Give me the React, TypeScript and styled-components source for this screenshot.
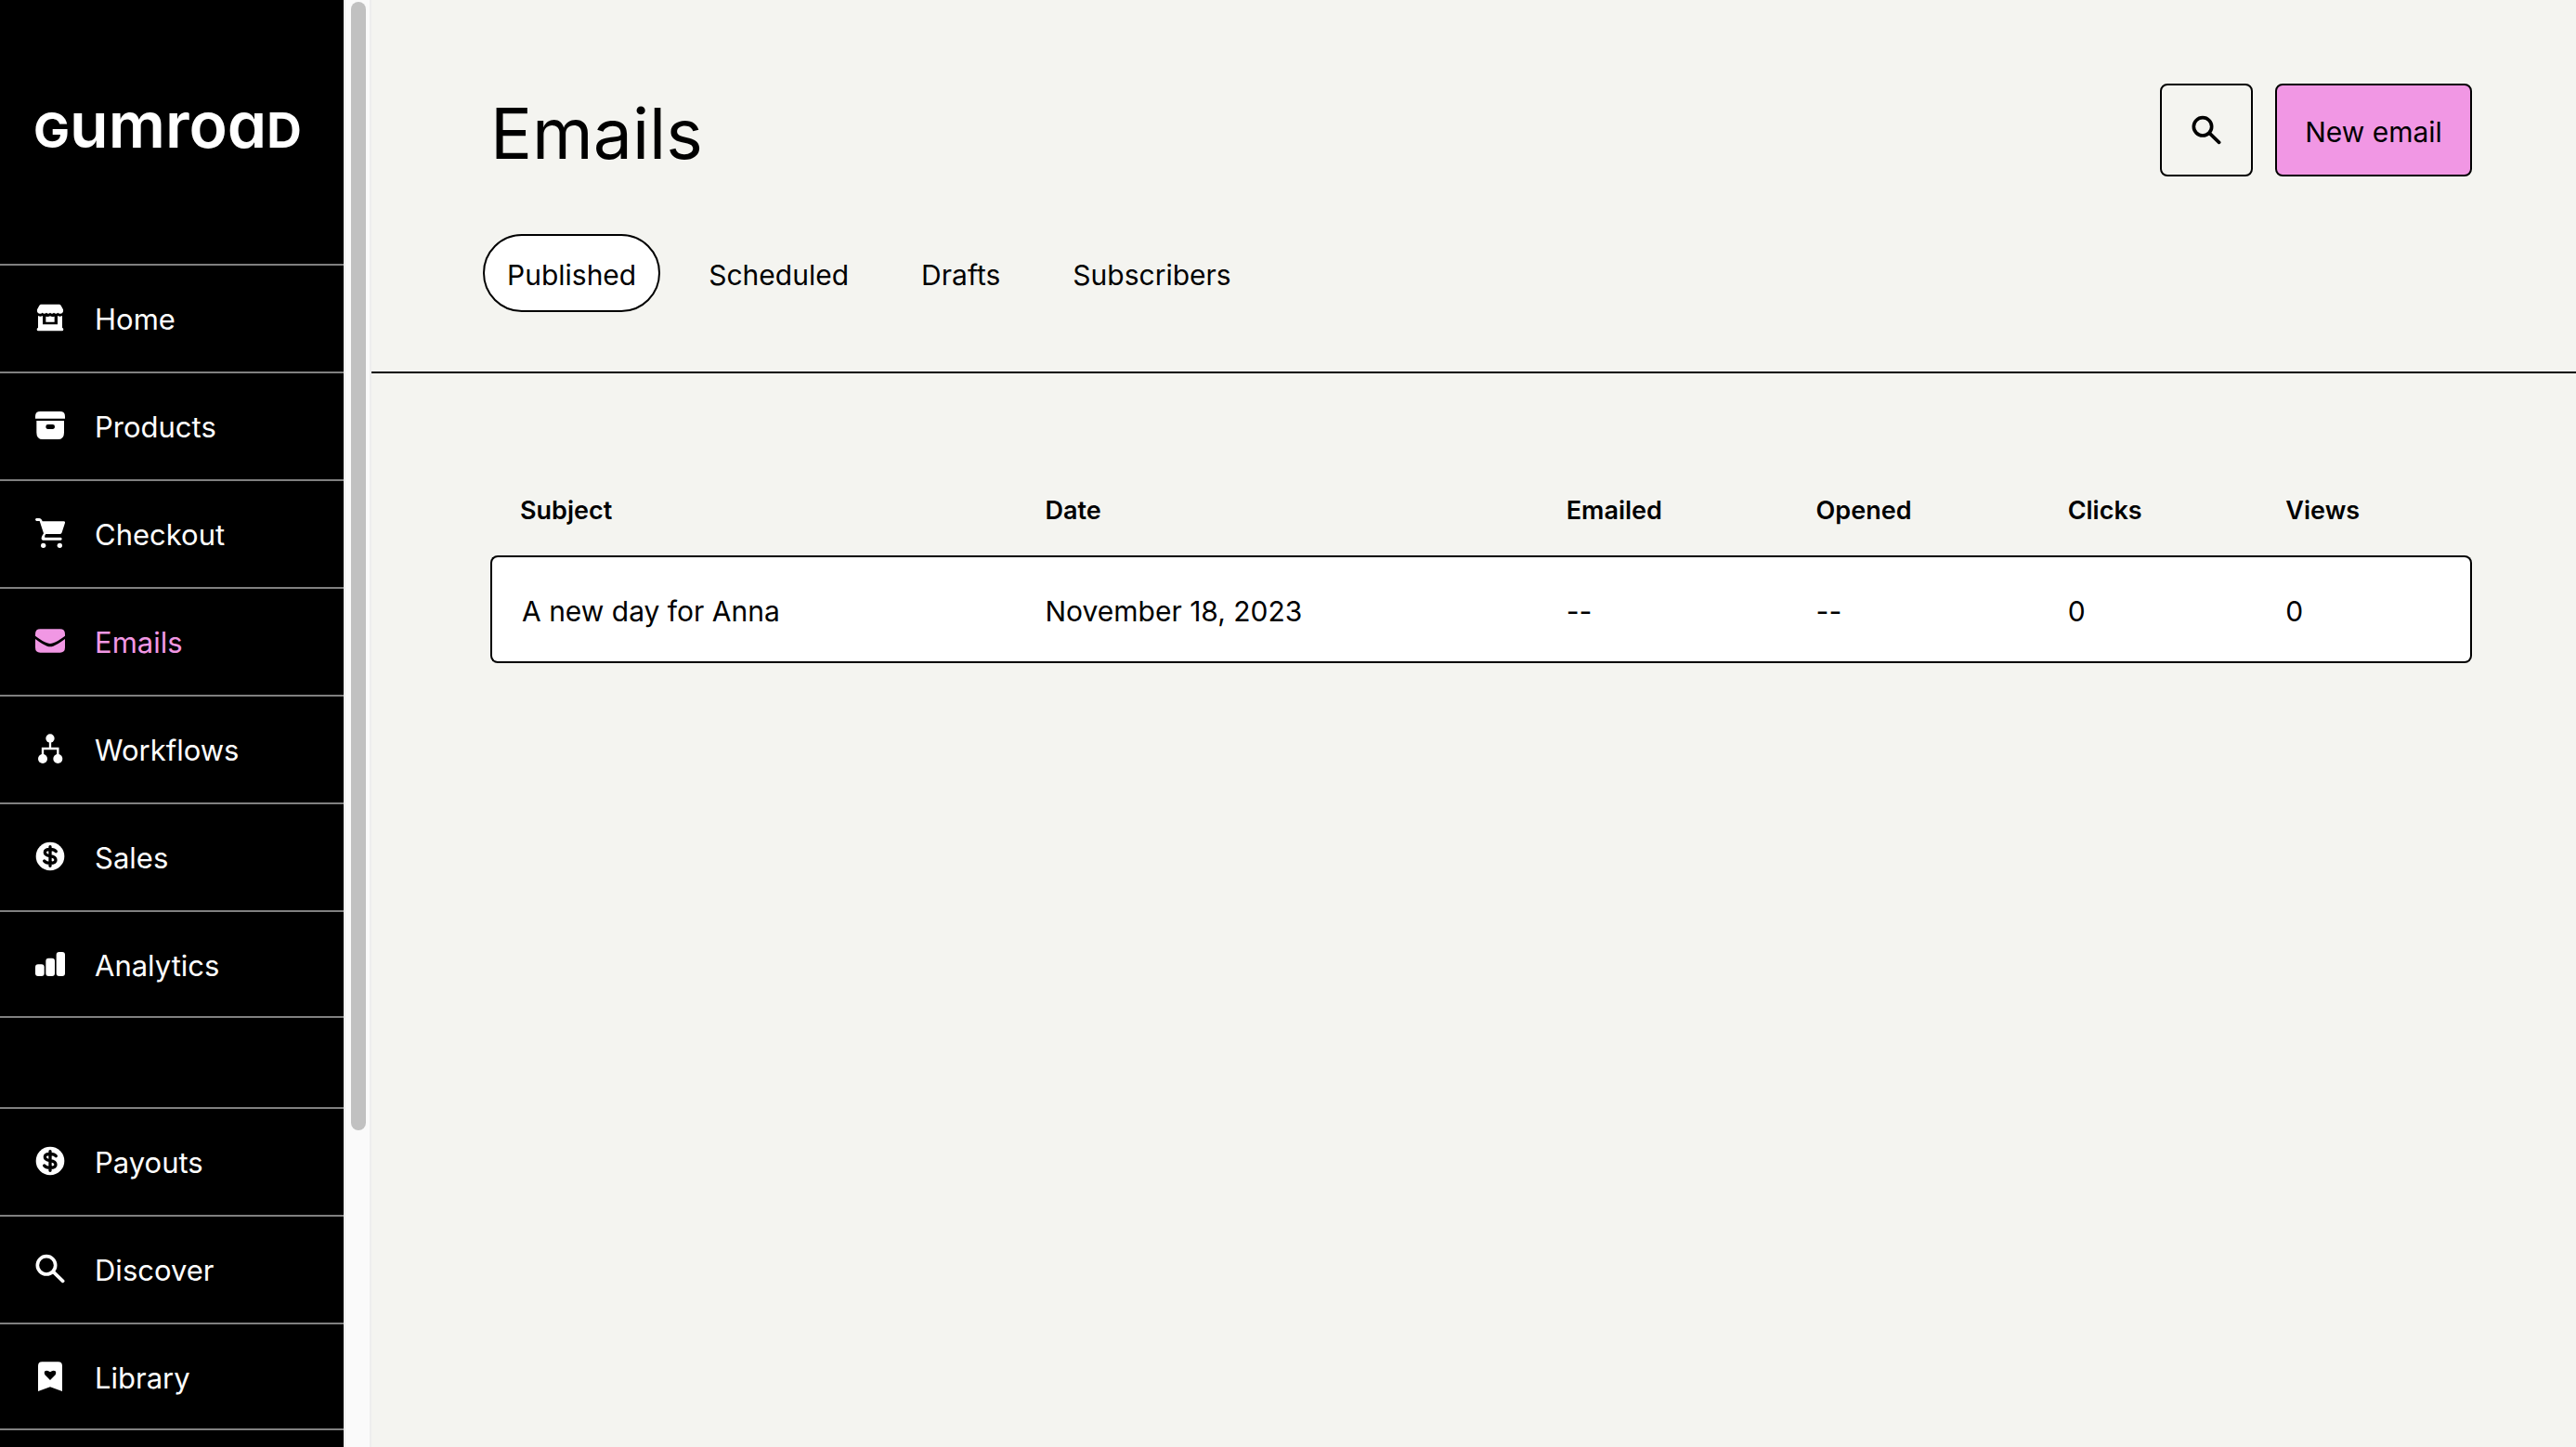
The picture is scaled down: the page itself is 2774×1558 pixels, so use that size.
import React from "react";
import styled, { createGlobalStyle } from "styled-components";

const PINK = "#f197e4";
const CANVAS = "#f4f4f0";

const GlobalStyle = createGlobalStyle`
  *, *::before, *::after { box-sizing: border-box; }
  html, body { margin: 0; background: ${CANVAS}; }
  body, button {
    font-family: Inter, "Liberation Sans", Arial, sans-serif;
    font-size: 30px;
    line-height: 44px;
    color: #000;
  }
`;

const Shell = styled.div`
  display: flex;
  min-height: 100vh;
`;

const Sidebar = styled.nav`
  flex: 0 0 370px;
  height: 100vh;
  overflow: hidden;
  background: #000;
  color: #fff;
`;

const LogoLink = styled.a`
  display: flex;
  align-items: baseline;
  height: 284px;
  padding: 102px 0 0 36px;
  color: #fff;
  text-decoration: none;
  font-size: 68px;
  font-weight: 600;
  line-height: 64px;
  font-feature-settings: "cv11" 1;
`;

const LogoCap = styled.span`
  font-size: 52px;
  font-weight: 700;
`;

const NavList = styled.ul`
  list-style: none;
  margin: 0 0 96px;
  padding: 0;
`;

const NavItem = styled.li`
  height: 116px;
  border-top: 2px solid #808080;
  &:last-child { border-bottom: 2px solid #808080; }
`;

const NavLink = styled.a<{ $active?: boolean }>`
  display: flex;
  align-items: center;
  gap: 32px;
  height: 112px;
  padding: 0 38px;
  color: ${(p) => (p.$active ? PINK : "#fff")};
  text-decoration: none;
  font-size: 31px;
`;

const Label = styled.span`
  padding-top: 4px;
`;

const IconBox = styled.svg`
  flex: none;
  width: 32px;
  height: 32px;
  fill: currentColor;
`;

const ScrollTrack = styled.div`
  flex: 0 0 30px;
  height: 100vh;
  padding: 2px 4px 2px 6px;
  background: #fafafa;
  border: solid #ededed;
  border-width: 0 2px;
`;

const ScrollThumb = styled.div`
  height: 78.2%;
  border-radius: 8px;
  background: #c1c1c1;
`;

const Main = styled.main`
  flex: 1;
  min-width: 0;
`;

const Header = styled.header`
  padding: 90px 112px 64px 128px;
  border-bottom: 2px solid #000;
`;

const TitleRow = styled.div`
  display: flex;
  align-items: center;
  justify-content: space-between;
`;

const Title = styled.h1`
  margin: 0;
  padding-top: 8px;
  font-size: 75px;
  font-weight: 400;
  line-height: 92px;
`;

const Actions = styled.div`
  display: flex;
  gap: 24px;
`;

const Button = styled.button<{ $primary?: boolean }>`
  display: flex;
  align-items: center;
  justify-content: center;
  width: ${(p) => (p.$primary ? "212px" : "100px")};
  height: 100px;
  padding: 0;
  border: 2px solid #000;
  border-radius: 8px;
  background: ${(p) => (p.$primary ? PINK : "transparent")};
  white-space: nowrap;
  cursor: pointer;
`;

const Tabs = styled.div`
  display: flex;
  gap: 26px;
  margin: 62px 0 0 -8px;
`;

const Tab = styled.button<{ $active?: boolean }>`
  height: 84px;
  padding: 4px 24px 0;
  border: 2px solid ${(p) => (p.$active ? "#000" : "transparent")};
  border-radius: 42px;
  background: ${(p) => (p.$active ? "#fff" : "transparent")};
  cursor: pointer;
`;

const Content = styled.section`
  padding: 96px 112px 96px 128px;
`;

const Table = styled.table`
  width: 100%;
  table-layout: fixed;
  border-collapse: separate;
  border-spacing: 0;
  text-align: left;
`;

const Col = styled.col<{ $share: number }>`
  width: ${(p) => p.$share}%;
`;

const HeadCell = styled.th`
  height: 100px;
  padding: 4px 0 0 32px;
  font-size: 27px;
  font-weight: 600;
`;

const Cell = styled.td`
  height: 116px;
  padding: 4px 0 0 32px;
  background: #fff;
  border: solid #000;
  border-width: 2px 0;
  &:first-child {
    border-left-width: 2px;
    border-radius: 8px 0 0 8px;
  }
  &:last-child {
    border-right-width: 2px;
    border-radius: 0 8px 8px 0;
  }
`;

type IconName =
  | "shop" | "archive" | "cart" | "mail" | "flow" | "dollar" | "bars" | "search" | "bookmark";

const drawings: Record<IconName, React.ReactNode> = {
  shop: (
    <>
      <path d="M19 5H77Q81 5 83 9L90 22Q92 34 82 35Q76 36 73 32Q67 38 60 32Q54 38 48 32Q42 38 36 32Q29 38 23 32Q20 36 14 35Q4 34 6 22L13 9Q15 5 19 5Z" />
      <path d="M9 42Q17 46 24 42V70H72V42Q80 46 87 42V81Q91 82 91 86Q91 91 86 91H10Q5 91 5 86Q5 82 9 81Z" />
      <path d="M34 44Q42 47 48 43Q54 47 62 44V62H34Z" />
    </>
  ),
  archive: (
    <>
      <path d="M16 3H80Q96 3 96 19V26H0V19Q0 3 16 3Z" />
      <path fillRule="evenodd" d="M4 33H93V71Q93 93 73 93H24Q4 93 4 71ZM41 45Q34 45 34 52Q34 60 41 60H56Q63 60 63 52Q63 45 56 45Z" />
    </>
  ),
  cart: (
    <>
      <path d="M4 0H13Q18 0 21 5L23 10H92Q97 10 96 15L86 46Q85 51 80 51H34Q29 56 31 62H82Q86 63 86 67Q86 71 82 71H24Q19 70 20 63L22 57L27 49L14 9H4Q0 8 0 4Q0 1 4 0Z" />
      <circle cx="26" cy="88" r="8" />
      <circle cx="79" cy="88" r="8" />
    </>
  ),
  mail: (
    <>
      <path d="M16 10H80Q96 10 96 26V32Q72 50 58 55Q48 59 38 55Q24 50 0 32V26Q0 10 16 10Z" />
      <path d="M0 42Q24 60 38 65Q48 68 58 65Q72 60 96 42V70Q96 86 80 86H16Q0 86 0 70Z" />
    </>
  ),
  flow: (
    <>
      <path d="M24 82V48H73V82M48 48V15" fill="none" stroke="currentColor" strokeWidth="7" />
      <circle cx="48" cy="15" r="14" />
      <circle cx="24" cy="81" r="15" />
      <circle cx="73" cy="81" r="15" />
    </>
  ),
  dollar: (
    <>
      <circle cx="48" cy="48" r="46" />
      <path d="M67 32Q62 25 48 25Q31 25 31 35Q31 44 48 47Q66 50 66 60Q66 70 48 70Q34 70 29 63M48 17V79" fill="none" stroke="#000" strokeWidth="10" strokeLinecap="round" />
    </>
  ),
  bars: (
    <>
      <rect x="0" y="49" width="29" height="38" rx="9" />
      <rect x="34" y="29" width="29" height="58" rx="9" />
      <rect x="68" y="9" width="28" height="78" rx="9" />
    </>
  ),
  search: (
    <g fill="none" stroke="currentColor" strokeWidth="11" strokeLinecap="round">
      <circle cx="36" cy="37" r="29" />
      <path d="M58 58L89 88" />
    </g>
  ),
  bookmark: (
    <path
      fillRule="evenodd"
      d="M22 1H74Q87 1 87 14V96L48 82L9 96V14Q9 1 22 1ZM48 60L65 43Q69 36 65 31Q57 26 48 34Q39 26 31 31Q27 36 31 43Z"
    />
  ),
};

const Icon = ({ name }: { name: IconName }) => (
  <IconBox viewBox="0 0 96 96" aria-hidden="true">{drawings[name]}</IconBox>
);

const primaryNav: [string, IconName][] = [
  ["Home", "shop"],
  ["Products", "archive"],
  ["Checkout", "cart"],
  ["Emails", "mail"],
  ["Workflows", "flow"],
  ["Sales", "dollar"],
  ["Analytics", "bars"],
];

const secondaryNav: [string, IconName][] = [
  ["Payouts", "dollar"],
  ["Discover", "search"],
  ["Library", "bookmark"],
];

const columns: [string, number][] = [
  ["Subject", 26.5],
  ["Date", 26.3],
  ["Emailed", 12.6],
  ["Opened", 12.7],
  ["Clicks", 11],
  ["Views", 10.9],
];

const emails = [["A new day for Anna", "November 18, 2023", "--", "--", "0", "0"]];

const NavGroup = ({ items }: { items: [string, IconName][] }) => (
  <NavList>
    {items.map(([label, icon]) => (
      <NavItem key={label}>
        <NavLink href="#" $active={label === "Emails"} aria-current={label === "Emails" ? "page" : undefined}>
          <Icon name={icon} />
          <Label>{label}</Label>
        </NavLink>
      </NavItem>
    ))}
  </NavList>
);

export default function App() {
  return (
    <>
      <GlobalStyle />
      <Shell>
        <Sidebar aria-label="Main">
          <LogoLink href="#" aria-label="Gumroad">
            <LogoCap>G</LogoCap>umroa<LogoCap>D</LogoCap>
          </LogoLink>
          <NavGroup items={primaryNav} />
          <NavGroup items={secondaryNav} />
        </Sidebar>
        <ScrollTrack aria-hidden="true">
          <ScrollThumb />
        </ScrollTrack>
        <Main>
          <Header>
            <TitleRow>
              <Title>Emails</Title>
              <Actions>
                <Button aria-label="Search"><Icon name="search" /></Button>
                <Button $primary><Label>New email</Label></Button>
              </Actions>
            </TitleRow>
            <Tabs role="tablist">
              {["Published", "Scheduled", "Drafts", "Subscribers"].map((tab, i) => (
                <Tab key={tab} role="tab" aria-selected={i === 0} $active={i === 0}>{tab}</Tab>
              ))}
            </Tabs>
          </Header>
          <Content>
            <Table>
              <colgroup>
                {columns.map(([name, share]) => <Col key={name} $share={share} />)}
              </colgroup>
              <thead>
                <tr>
                  {columns.map(([name]) => <HeadCell key={name} scope="col">{name}</HeadCell>)}
                </tr>
              </thead>
              <tbody>
                {emails.map((row) => (
                  <tr key={row[0]}>
                    {row.map((value, i) => <Cell key={i}>{value}</Cell>)}
                  </tr>
                ))}
              </tbody>
            </Table>
          </Content>
        </Main>
      </Shell>
    </>
  );
}
